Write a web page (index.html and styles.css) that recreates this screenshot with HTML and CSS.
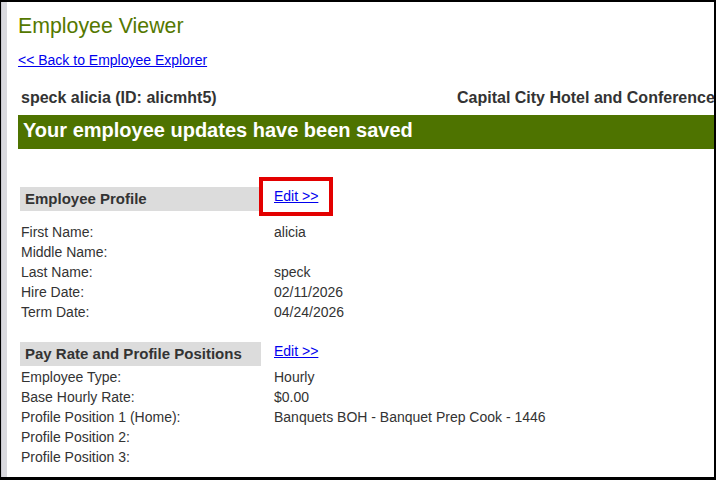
FILE: index.html
```html
<!DOCTYPE html>
<html>
<head>
<meta charset="utf-8">
<link rel="stylesheet" href="styles.css">
</head>
<body>
<div class="frame">
  <div class="stripe"></div>
  <div class="content">
    <h1 class="title">Employee Viewer</h1>
    <a class="back" href="#">&lt;&lt; Back to Employee Explorer</a>
    <div class="identity">
      <div class="name">speck alicia (ID: alicmht5)</div>
      <div class="company">Capital City Hotel and Conference Center</div>
    </div>
    <div class="banner">Your employee updates have been saved</div>

    <div class="section-head first">
      <div class="bar">Employee Profile</div>
      <a class="edit marked" href="#">Edit &gt;&gt;<span class="mark"></span></a>
    </div>
    <div class="rows gap-lg">
      <div class="label">First Name:</div><div class="value">alicia</div>
      <div class="label">Middle Name:</div><div class="value"></div>
      <div class="label">Last Name:</div><div class="value">speck</div>
      <div class="label">Hire Date:</div><div class="value">02/11/2026</div>
      <div class="label">Term Date:</div><div class="value">04/24/2026</div>
    </div>

    <div class="section-head second">
      <div class="bar">Pay Rate and Profile Positions</div>
      <a class="edit" href="#">Edit &gt;&gt;</a>
    </div>
    <div class="rows gap-sm">
      <div class="label">Employee Type:</div><div class="value">Hourly</div>
      <div class="label">Base Hourly Rate:</div><div class="value">$0.00</div>
      <div class="label">Profile Position 1 (Home):</div><div class="value">Banquets BOH - Banquet Prep Cook - 1446</div>
      <div class="label">Profile Position 2:</div><div class="value"></div>
      <div class="label">Profile Position 3:</div><div class="value"></div>
    </div>
  </div>
</div>
</body>
</html>
```

FILE: styles.css
```css
* { box-sizing: border-box; }
html, body { margin: 0; padding: 0; background: #fff; }
body {
  font-family: "Liberation Sans", Arial, sans-serif;
  color: #333;
  width: 716px;
  height: 480px;
  overflow: hidden;
}
.frame {
  width: 716px;
  height: 480px;
  border-top: 2px solid #000;
  border-left: 1px solid #000;
  border-right: 2px solid #000;
  border-bottom: 3px solid #000;
  display: flex;
  overflow: hidden;
}
.stripe {
  width: 6px;
  flex: none;
  background: #d9d9de;
  border-left: 1px solid #c8c8cf;
}
.content {
  flex: 1;
  min-width: 0;
  padding-left: 11px;
  overflow: hidden;
}
.title {
  margin: 12px 0 0 0;
  font-size: 21.33px;
  line-height: 24px;
  font-weight: normal;
  color: #547800;
}
.back {
  display: inline-block;
  margin-top: 14px;
  font-size: 14px;
  line-height: 16px;
  color: #0000ee;
}
.identity {
  display: grid;
  grid-template-columns: 439px max-content;
  margin-top: 20px;
  font-size: 16px;
  line-height: 18px;
  font-weight: bold;
  white-space: nowrap;
}
.name { padding-left: 3px; }
.banner {
  margin-top: 8px;
  height: 34px;
  padding: 0 0 4px 5px;
  background: #4e7300;
  color: #fff;
  font-size: 20px;
  line-height: 30px;
  font-weight: bold;
  white-space: nowrap;
}
.section-head {
  display: flex;
  align-items: flex-start;
}
.section-head.first { margin-top: 38px; }
.section-head.second { margin-top: 20px; }
.bar {
  margin-left: 2px;
  width: 241px;
  height: 24px;
  padding-left: 5px;
  background: #dcdcdc;
  font-size: 15px;
  line-height: 24px;
  font-weight: bold;
  white-space: nowrap;
}
.edit {
  margin-left: 13px;
  margin-top: 1px;
  font-size: 14px;
  line-height: 16px;
  color: #0000ee;
}
.marked { position: relative; }
.mark {
  position: absolute;
  left: -15px;
  top: -11px;
  width: 74px;
  height: 39px;
  border: 4px solid #e30000;
}
.rows {
  display: grid;
  grid-template-columns: 253px 1fr;
  font-size: 14px;
  line-height: 20px;
  padding-left: 3px;
}
.rows.gap-lg { margin-top: 11px; }
.rows.gap-sm { margin-top: 1px; }
.value { min-height: 20px; white-space: nowrap; }
```
